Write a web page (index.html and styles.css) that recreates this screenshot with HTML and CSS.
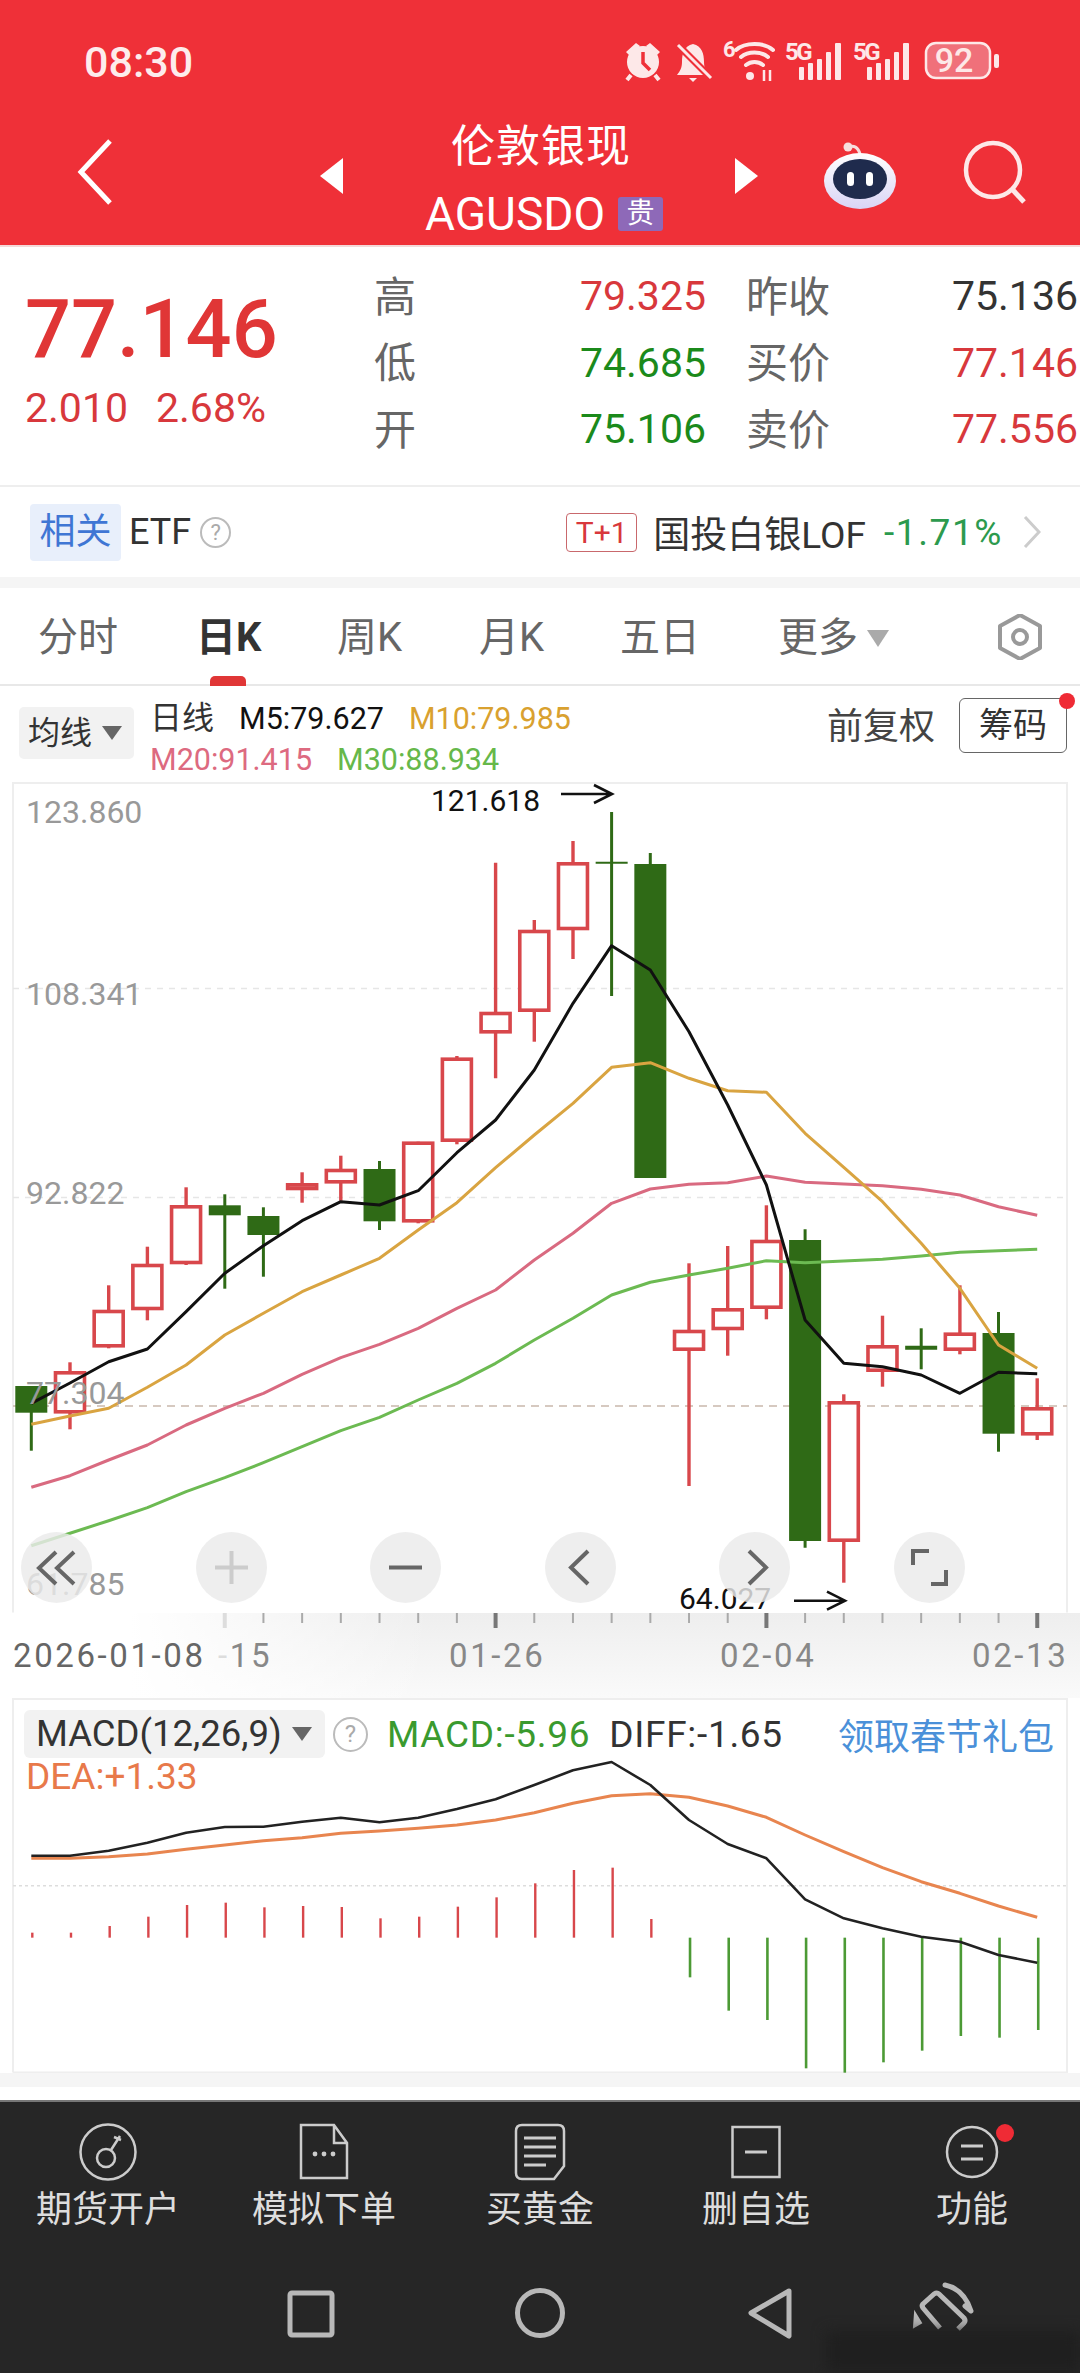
FILE: index.html
```html
<!DOCTYPE html>
<html lang="zh-CN">
<head>
<meta charset="UTF-8">
<title>伦敦银现</title>
<link rel="stylesheet" href="styles.css">
</head>
<body>
<div class="phone">

    <header class="top">
        <div class="status">
            <span class="clock">08:30</span>
            <svg class="status-icons" viewBox="625 30 374 52" width="374" height="52">
                <g fill="#fde8e8" stroke="none">
                    <circle cx="643" cy="62" r="16"/>
                    <path d="M626 52 L636 43 L640 46 L630 56 Z M660 52 L650 43 L646 46 L656 56 Z"/>
                    <path d="M631 75 L627 80 M655 75 L659 80" stroke="#fde8e8" stroke-width="4"/>
                    <path d="M643 52 V63 L650 70" fill="none" stroke="#ef3038" stroke-width="3.5"/>
                    <path d="M693 44 C684 46 682 54 682 62 C682 68 680 71 677 75 H709 C706 71 704 68 704 62 C704 54 702 46 693 44 Z"/>
                    <path d="M689 78 H697 L693 82 Z"/>
                    <path d="M678 45 L711 78" stroke="#ef3038" stroke-width="7"/>
                    <path d="M678 45 L711 78" stroke="#fde8e8" stroke-width="3"/>
                </g>
                <text x="723" y="57" class="st-small">6</text>
                <g fill="none" stroke="#fde8e8" stroke-width="4" stroke-linecap="round">
                    <path d="M736 50 C745 42 764 42 773 50"/>
                    <path d="M741 57 C748 51 761 51 768 57"/>
                    <path d="M746 65 C751 61 758 61 763 65"/>
                </g>
                <circle cx="750" cy="76" r="4" fill="#fde8e8"/>
                <path d="M764 70 V81 M770 70 V81" stroke="#fde8e8" stroke-width="2.5"/>
                <text x="785" y="60" class="st-small st-5g">5G</text>
                <g fill="#fde8e8">
                    <rect x="799" y="67" width="5" height="13" rx="1"/><rect x="808" y="63" width="5" height="17" rx="1"/>
                    <rect x="817" y="59" width="5" height="21" rx="1"/><rect x="826" y="52" width="5" height="28" rx="1"/><rect x="835" y="43" width="6" height="37" rx="1"/>
                </g>
                <text x="853" y="60" class="st-small st-5g">5G</text>
                <g fill="#fde8e8">
                    <rect x="867" y="67" width="5" height="13" rx="1"/><rect x="876" y="63" width="5" height="17" rx="1"/>
                    <rect x="885" y="59" width="5" height="21" rx="1"/><rect x="894" y="52" width="5" height="28" rx="1"/><rect x="903" y="43" width="6" height="37" rx="1"/>
                </g>
                <rect x="926" y="43" width="64" height="35" rx="10" fill="#f0707a" stroke="#fde8e8" stroke-width="2.5"/>
                <text x="954" y="72" class="st-batt" text-anchor="middle">92</text>
                <rect x="994" y="54" width="5" height="14" rx="2" fill="#fde8e8"/>
            </svg>
        </div>
        <div class="nav">
            <svg class="nav-back" width="36" height="66" viewBox="0 0 36 66">
                <path d="M33 2 L4 33 L33 64" fill="none" stroke="#fff" stroke-width="5"/>
            </svg>
            <span class="tri-left"></span>
            <div class="nav-title">
                <div class="nav-name">伦敦银现</div>
                <div class="nav-code">AGUSDO<span class="badge-gui">贵</span></div>
            </div>
            <span class="tri-right"></span>
            <svg class="nav-robot" width="76" height="72" viewBox="0 0 76 72">
                <defs>
                    <linearGradient id="robotHead" x1="0" y1="0" x2="0" y2="1">
                        <stop offset="0" stop-color="#ffffff"/><stop offset="1" stop-color="#d9d4f5"/>
                    </linearGradient>
                </defs>
                <path d="M26 8 C32 6 36 8 38 15" fill="none" stroke="#f7dede" stroke-width="3"/>
                <circle cx="26" cy="8" r="4.5" fill="#f7dede"/>
                <ellipse cx="38" cy="42" rx="36" ry="28" fill="url(#robotHead)"/>
                <ellipse cx="38" cy="40" rx="27" ry="20" fill="#1f2b4d"/>
                <rect x="25" y="33" width="7" height="14" rx="3.5" fill="#fff"/>
                <rect x="44" y="33" width="7" height="14" rx="3.5" fill="#fff"/>
            </svg>
            <svg class="nav-search" width="68" height="68" viewBox="0 0 68 68">
                <circle cx="31" cy="31" r="27" fill="none" stroke="#fde8e8" stroke-width="4.5"/>
                <path d="M50 50 L62 63" stroke="#fde8e8" stroke-width="5"/>
            </svg>
        </div>
    </header>

    <section class="quote">
        <div class="last">
            <div class="last-price">77.146</div>
            <div class="last-change"><span>2.010</span><span>2.68%</span></div>
        </div>
        <div class="quote-grid">
            <span class="q-label">高</span><span class="q-val up">79.325</span>
            <span class="q-label second">昨收</span><span class="q-val flat">75.136</span>
            <span class="q-label">低</span><span class="q-val down">74.685</span>
            <span class="q-label second">买价</span><span class="q-val up">77.146</span>
            <span class="q-label">开</span><span class="q-val down">75.106</span>
            <span class="q-label second">卖价</span><span class="q-val up">77.556</span>
        </div>
    </section>

    <section class="etf">
        <span class="etf-tag">相关</span>
        <span class="etf-name">ETF</span>
        <span class="help">?</span>
        <span class="etf-right">
            <span class="t1">T+1</span>
            <span class="etf-fund">国投白银LOF</span>
            <span class="etf-pct">-1.71%</span>
            <svg width="18" height="32" viewBox="0 0 18 32"><path d="M2 1 L16 16 L2 31" fill="none" stroke="#ccc" stroke-width="3"/></svg>
        </span>
    </section>

    <div class="gap"></div>

    <nav class="tabs">
        <span class="tab">分时</span>
        <span class="tab active">日K</span>
        <span class="tab">周K</span>
        <span class="tab">月K</span>
        <span class="tab">五日</span>
        <span class="tab">更多<i class="caret"></i></span>
        <svg class="hex" width="50" height="46" viewBox="0 0 50 46">
            <path d="M14 3 H36 L47 23 L36 43 H14 L3 23 Z" fill="none" stroke="#999" stroke-width="4" stroke-linejoin="round" transform="rotate(90 25 23)"/>
            <circle cx="25" cy="23" r="7" fill="none" stroke="#999" stroke-width="4"/>
        </svg>
    </nav>

    <div class="ma-row">
        <div class="ma-pill">均线<i class="caret small"></i></div>
        <div class="ma-values">
            <div class="ma-line"><span class="ma-kind">日线</span><span class="ma5">M5:79.627</span><span class="ma10">M10:79.985</span></div>
            <div class="ma-line"><span class="ma20">M20:91.415</span><span class="ma30">M30:88.934</span></div>
        </div>
        <span class="ma-adjust">前复权</span>
        <span class="ma-chip">筹码</span>
    </div>

    <div class="kline">
        <svg id="klineSvg" class="kline-svg" width="1080" height="831" viewBox="0 782 1080 831"></svg>
        <div class="zoom-bar">
            <span class="zoom-btn"><svg width="71" height="71" viewBox="0 0 71 71"><path d="M35 20 L18 36 L35 52 M53 20 L36 36 L53 52" fill="none" stroke="#666" stroke-width="4"/></svg></span>
            <span class="zoom-btn"><svg width="71" height="71" viewBox="0 0 71 71"><path d="M19 35.5 H52 M35.5 19 V52" fill="none" stroke="#ccc" stroke-width="4"/></svg></span>
            <span class="zoom-btn"><svg width="71" height="71" viewBox="0 0 71 71"><path d="M19 35.5 H52" fill="none" stroke="#666" stroke-width="4"/></svg></span>
            <span class="zoom-btn"><svg width="71" height="71" viewBox="0 0 71 71"><path d="M43 19 L26 35.5 L43 52" fill="none" stroke="#666" stroke-width="4"/></svg></span>
            <span class="zoom-btn"><svg width="71" height="71" viewBox="0 0 71 71"><path d="M30 19 L47 35.5 L30 52" fill="none" stroke="#666" stroke-width="4"/></svg></span>
            <span class="zoom-btn"><svg width="71" height="71" viewBox="0 0 71 71"><path d="M19 33 V19 H35 M52 38 V52 H37" fill="none" stroke="#666" stroke-width="4"/></svg></span>
        </div>
    </div>

    <div class="axis">
        <svg id="axisSvg" width="1080" height="85" viewBox="0 1613 1080 85"></svg>
    </div>

    <div class="macd">
        <div class="macd-head">
            <span class="macd-pill">MACD(12,26,9)<i class="caret small"></i></span>
            <span class="help macd-help">?</span>
            <span class="macd-val">MACD:-5.96</span>
            <span class="diff-val">DIFF:-1.65</span>
            <span class="macd-link">领取春节礼包</span>
        </div>
        <div class="dea-val">DEA:+1.33</div>
        <svg id="macdSvg" class="macd-svg" width="1080" height="375" viewBox="0 1698 1080 375"></svg>
    </div>

    <div class="gap gap-low"></div>
    <div class="white-strip"></div>

    <footer class="dock">
        <div class="dock-row">
            <div class="dock-item">
                <svg width="60" height="60" viewBox="0 0 60 60" fill="none" stroke="#ccc" stroke-width="2.5">
                    <circle cx="30" cy="30" r="27.5"/>
                    <circle cx="28" cy="36" r="9"/>
                    <path d="M33 28 L42 14 M36 15 L43 18"/>
                </svg>
                <span>期货开户</span>
            </div>
            <div class="dock-item">
                <svg width="60" height="60" viewBox="0 0 60 60" fill="none" stroke="#ccc" stroke-width="2.5">
                    <path d="M7 3 H40 L53 21 V56 H7 Z M40 3 V21 H53"/>
                    <circle cx="21" cy="32" r="2.4" fill="#ccc" stroke="none"/><circle cx="30" cy="32" r="2.4" fill="#ccc" stroke="none"/><circle cx="39" cy="32" r="2.4" fill="#ccc" stroke="none"/>
                </svg>
                <span>模拟下单</span>
            </div>
            <div class="dock-item">
                <svg width="60" height="60" viewBox="0 0 60 60" fill="none" stroke="#ccc" stroke-width="2.5">
                    <path d="M12 3 H48 Q54 3 54 9 V44 L44 57 H12 Q6 57 6 51 V9 Q6 3 12 3 Z"/>
                    <path d="M14 16 H46 M14 25 H46 M14 34 H46 M14 43 H36" stroke-width="3"/>
                </svg>
                <span>买黄金</span>
            </div>
            <div class="dock-item">
                <svg width="60" height="60" viewBox="0 0 60 60" fill="none" stroke="#ccc" stroke-width="2.5">
                    <rect x="6.5" y="5" width="47" height="50"/>
                    <path d="M19 30 H41" stroke-width="3"/>
                </svg>
                <span>删自选</span>
            </div>
            <div class="dock-item">
                <svg width="60" height="60" viewBox="0 0 60 60" fill="none" stroke="#ccc" stroke-width="2.5">
                    <circle cx="30" cy="30" r="25"/>
                    <path d="M19 24 H41 M19 37 H41" stroke-width="3"/>
                </svg>
                <span>功能</span>
                <i class="dock-dot"></i>
            </div>
        </div>
        <svg class="sys-nav" width="1080" height="60" viewBox="0 2282 1080 60" fill="none" stroke="#b8b8b8" stroke-width="5">
            <rect x="290" y="2293" width="42" height="42" rx="2"/>
            <circle cx="540" cy="2313" r="22.5"/>
            <path d="M789 2291 L751 2313 L789 2336 Z" stroke-linejoin="round"/>
            <path d="M940 2328 L923 2308 Q921 2305 924 2303 L934 2294 Q937 2292 939 2294 L964 2318 Q966 2321 964 2323 L958 2329" stroke-linejoin="round"/>
            <path d="M945 2285 Q964 2289 971 2311 L965 2306" stroke-linejoin="round" stroke-linecap="round"/>
            <path d="M915 2313 L914 2327 L921 2323 Z" fill="#b8b8b8" stroke-width="2"/>
        </svg>
        <div class="smudge"></div>
    </footer>
</div>
<script src="script.js"></script>
</body>
</html>
```

FILE: styles.css
```css
* {
    box-sizing: border-box;
}
html, body {
    margin: 0;
    padding: 0;
    background: #fff;
}
body {
    font-family: Roboto, "Noto Sans CJK SC", sans-serif;
    color: #333;
}
i {
    font-style: normal;
}
.phone {
    width: 1080px;
    height: 2373px;
    display: flex;
    flex-direction: column;
    overflow: hidden;
}

/* header */
.top {
    height: 247px;
    background: #ef3038;
    border-bottom: 2px solid #f3d9d9;
    color: #fff;
    flex: none;
}
.status {
    height: 106px;
    display: flex;
    align-items: flex-start;
    justify-content: space-between;
    padding: 30px 81px 0 84px;
}
.clock {
    font-size: 43px;
    font-weight: 500;
    line-height: 44px;
    margin-top: 10px;
    color: #fdecec;
}
.st-small {
    font: 700 22px Roboto, sans-serif;
    fill: #fde8e8;
}
.st-5g {
    font-size: 24px;
    letter-spacing: -2.5px;
}
.st-batt {
    font: 500 34px Roboto, sans-serif;
    fill: #fde8e8;
}
.nav {
    position: relative;
    height: 139px;
    display: flex;
    align-items: center;
}
.nav-back {
    margin-left: 77px;
    margin-top: -8px;
}
.tri-left, .tri-right {
    width: 0;
    height: 0;
    border-top: 18px solid transparent;
    border-bottom: 18px solid transparent;
}
.tri-left {
    border-right: 23px solid #fff;
    margin-left: 207px;
}
.tri-right {
    border-left: 23px solid #fff;
}
.nav-title {
    width: 392px;
    text-align: center;
    margin-top: 9px;
}
.nav-name {
    font-size: 44px;
    line-height: 60px;
    letter-spacing: 1px;
    padding-left: 4px;
}
.nav-code {
    font-size: 46px;
    line-height: 60px;
    padding-left: 10px;
    margin-top: 7px;
    display: flex;
    align-items: center;
    justify-content: center;
    gap: 13px;
}
.badge-gui {
    width: 45px;
    height: 34px;
    background: #8e69b8;
    font-size: 28px;
    line-height: 34px;
    border-radius: 3px;
    text-align: center;
}
.nav-robot {
    margin-left: 64px;
    margin-top: -2px;
}
.nav-search {
    margin-left: 64px;
    margin-top: -6px;
}

/* quote block */
.quote {
    height: 240px;
    flex: none;
    display: flex;
    padding-top: 13px;
    border-bottom: 2px solid #eee;
}
.last {
    width: 374px;
    padding-left: 25px;
}
.last-price {
    font-size: 81px;
    font-weight: 500;
    line-height: 98px;
    margin-top: 21px;
    color: #e03636;
}
.last-change {
    display: flex;
    gap: 28px;
    font-size: 41px;
    line-height: 46px;
    margin-top: 6px;
    color: #d8383c;
}
.quote-grid {
    display: grid;
    grid-template-columns: 44px 288px 127px 245px;
    grid-auto-rows: 66.5px;
    align-items: center;
}
.q-label {
    font-size: 42px;
    color: #666;
    white-space: nowrap;
}
.q-label.second {
    margin-left: 40px;
}
.q-val {
    font-size: 41px;
    text-align: right;
    padding-top: 6px;
}
.up {
    color: #d8383c;
}
.down {
    color: #1b8a1b;
}
.flat {
    color: #333;
}

/* etf row */
.etf {
    height: 90px;
    flex: none;
    display: flex;
    align-items: center;
    padding: 0 39px 0 30px;
}
.etf-tag {
    width: 91px;
    height: 57px;
    background: #e8effb;
    color: #3f76d4;
    font-size: 36px;
    line-height: 57px;
    text-align: center;
    border-radius: 4px;
}
.etf-name {
    font-size: 36px;
    margin-left: 8px;
}
.help {
    width: 31px;
    height: 31px;
    border: 2px solid #bbb;
    border-radius: 50%;
    color: #aaa;
    font-size: 22px;
    line-height: 27px;
    text-align: center;
    margin-left: 9px;
}
.etf-right {
    margin-left: auto;
    display: flex;
    align-items: center;
}
.t1 {
    width: 71px;
    height: 39px;
    border: 1px solid #c9686c;
    border-radius: 4px;
    color: #d8383c;
    font-size: 30px;
    line-height: 37px;
    text-align: center;
}
.etf-fund {
    font-size: 37px;
    margin-left: 16px;
}
.etf-pct {
    font-size: 37px;
    letter-spacing: 1.6px;
    color: #2c9a4e;
    margin-left: 18px;
    margin-right: 20px;
}
.gap {
    height: 11px;
    flex: none;
    background: #f5f5f5;
}

/* tabs */
.tabs {
    position: relative;
    height: 98px;
    flex: none;
    border-bottom: 2px solid #e8e8e8;
    display: grid;
    grid-template-columns: 158px 141px 142px 141px 158px 217px 50px;
    padding-left: 38px;
    padding-top: 21px;
}
.tab {
    font-size: 40px;
    line-height: 58px;
    color: #666;
    display: flex;
    align-items: flex-start;
}
.tab.active {
    color: #333;
    font-weight: 700;
    position: relative;
}
.tab.active::after {
    content: "";
    position: absolute;
    left: 14px;
    top: 67px;
    width: 36px;
    height: 10px;
    background: #e03636;
    border-radius: 5px 5px 0 0;
}
.caret {
    display: inline-block;
    width: 0;
    height: 0;
    border-left: 11px solid transparent;
    border-right: 11px solid transparent;
    border-top: 17px solid #aaa;
    margin: 21px 0 0 9px;
}
.caret.small {
    border-left-width: 10px;
    border-right-width: 10px;
    border-top-width: 14px;
    border-top-color: #666;
}
.hex {
    margin-top: 5px;
}

/* MA legend */
.ma-row {
    height: 96px;
    flex: none;
    display: flex;
    align-items: flex-start;
    padding: 12px 13px 0 19px;
}
.ma-pill {
    width: 115px;
    height: 52px;
    margin-top: 9px;
    background: #f2f2f2;
    border-radius: 5px;
    font-size: 32px;
    line-height: 52px;
    padding-left: 9px;
    display: flex;
}
.ma-pill .caret {
    margin: 19px 0 0 10px;
}
.ma-values {
    margin-left: 16px;
    font-size: 30.5px;
    line-height: 41px;
}
.ma-line {
    display: flex;
    gap: 25px;
}
.ma-kind {
    font-size: 32px;
    color: #333;
}
.ma5 { color: #111; }
.ma10 { color: #d9a12f; }
.ma20 { color: #dd6a80; }
.ma30 { color: #66b84a; }
.ma-adjust {
    margin-left: auto;
    font-size: 36px;
    line-height: 50px;
    margin-top: 4px;
    color: #444;
}
.ma-chip {
    position: relative;
    width: 108px;
    height: 55px;
    margin-left: 24px;
    border: 1px solid #666;
    border-radius: 6px;
    font-size: 34px;
    line-height: 53px;
    text-align: center;
}
.ma-chip::after {
    content: "";
    position: absolute;
    right: -9px;
    top: -6px;
    width: 16px;
    height: 16px;
    border-radius: 50%;
    background: #ef2b35;
}

/* kline */
.kline {
    position: relative;
    height: 831px;
    flex: none;
}
.kline-svg {
    display: block;
}
.price-label {
    font: 32px Roboto, sans-serif;
    fill: #999;
}
.note-label {
    font: 30px Roboto, sans-serif;
    fill: #111;
}
.zoom-bar {
    position: absolute;
    left: 21px;
    top: 750px;
    display: flex;
    gap: 103.6px;
}
.zoom-btn {
    width: 71px;
    height: 71px;
    border-radius: 50%;
    background: rgba(234, 234, 234, .82);
    display: block;
}
.zoom-btn svg {
    display: block;
}
.axis {
    height: 85px;
    flex: none;
    background:
        linear-gradient(90deg, #fff 0, #fff 12%, rgba(255, 255, 255, 0) 40%),
        linear-gradient(180deg, #eee 0, #fafafa 100%);
}
.axis svg {
    display: block;
}
.date-label {
    font: 33px Roboto, sans-serif;
    letter-spacing: 2.6px;
    fill: #888;
}
.date-label.first {
    fill: #666;
}

/* macd */
.macd {
    position: relative;
    height: 375px;
    flex: none;
}
.macd-svg {
    position: absolute;
    left: 0;
    top: 0;
}
.macd-head {
    position: relative;
    z-index: 1;
    display: flex;
    align-items: center;
    height: 48px;
    margin-top: 12px;
    padding-left: 24px;
    font-size: 37px;
}
.macd-pill {
    width: 301px;
    height: 48px;
    background: #f2f2f2;
    border-radius: 6px;
    padding-left: 12px;
    font-size: 36.5px;
    line-height: 48px;
    color: #333;
    display: flex;
    white-space: nowrap;
}
.macd-pill .caret {
    margin: 17px 0 0 10px;
}
.macd-help {
    width: 35px;
    height: 35px;
    font-size: 24px;
    line-height: 31px;
    margin-left: 8px;
}
.macd-val {
    color: #3a9a2e;
    letter-spacing: .7px;
    margin-left: 19px;
}
.diff-val {
    color: #333;
    letter-spacing: .7px;
    margin-left: 19px;
}
.macd-link {
    color: #4a90d9;
    font-size: 36px;
    margin-left: auto;
    margin-right: 26px;
}
.dea-val {
    position: relative;
    z-index: 1;
    font-size: 37px;
    line-height: 40px;
    padding-left: 26px;
    margin-top: -1px;
    color: #e8794a;
}
.gap-low {
    height: 14px;
}
.white-strip {
    height: 13px;
    flex: none;
}

/* bottom */
.dock {
    position: relative;
    flex: 1;
    background: #262626;
    border-top: 2px solid #777;
    color: #ddd;
}
.dock-row {
    display: grid;
    grid-template-columns: repeat(5, 216px);
    padding-top: 20px;
}
.dock-item {
    position: relative;
    display: flex;
    flex-direction: column;
    align-items: center;
    font-size: 36px;
    line-height: 50px;
}
.dock-item span {
    margin-top: 3px;
}
.dock-dot {
    position: absolute;
    left: 132px;
    top: 2px;
    width: 18px;
    height: 18px;
    border-radius: 50%;
    background: #ef2b35;
}
.sys-nav {
    display: block;
    position: absolute;
    left: 0;
    top: 180px;
}
.smudge {
    position: absolute;
    right: 0;
    bottom: 0;
    width: 254px;
    height: 42px;
    background: #1f1f1f;
    filter: blur(7px);
}
```

FILE: script.js
```js
// candle x = 31.3 + step * index, all y values are page pixels
const step = 38.69;
const xAt = i => 31.3 + step * i;

const RED = "#d8474b";
const GREEN = "#2f6a16";

// [color, bodyTop, bodyBottom, wickTop, wickBottom]
const candles = [
    ["g", 1386, 1412.7, 1386, 1450.7],
    ["r", 1371.3, 1413.3, 1362.3, 1429.3],
    ["r", 1310, 1347.3, 1285.3, 1348.3],
    ["r", 1264, 1310, 1246.7, 1320.3],
    ["r", 1205.3, 1264, 1187.3, 1265],
    ["g", 1205.3, 1215.3, 1194.3, 1288.7],
    ["g", 1216, 1235, 1207.3, 1276.7],
    ["r", 1183.3, 1190, 1172.3, 1202.7],
    ["r", 1169, 1183.3, 1155.7, 1200.7],
    ["g", 1169, 1221.3, 1161, 1230],
    ["r", 1141.7, 1222.3, 1141.7, 1223.3],
    ["r", 1057.7, 1141.7, 1056, 1144.3],
    ["r", 1012, 1033.3, 862.7, 1078.3],
    ["r", 930, 1011.7, 920, 1041.7],
    ["r", 862.3, 930, 841, 959],
    ["c", 862.7, 862.7, 812, 996],
    ["g", 864, 1178, 853, 1178],
    ["r", 1330, 1350.7, 1263.3, 1486],
    ["r", 1308.3, 1330, 1246, 1355.7],
    ["r", 1240, 1308.7, 1205.3, 1319.3],
    ["g", 1240, 1541, 1229.3, 1547.7],
    ["r", 1401.3, 1541.7, 1394.3, 1582.7],
    ["r", 1345.3, 1371.7, 1315.7, 1386.7],
    ["c", 1347.7, 1347.7, 1328.3, 1369.3],
    ["r", 1332.7, 1350.7, 1285.3, 1354.3],
    ["g", 1333, 1433.7, 1312, 1451.7],
    ["r", 1407.3, 1435.3, 1378.3, 1440]
];

const ma5 = [1403.3, 1383, 1361.7, 1349, 1311.7, 1273.3, 1245.7, 1220.7, 1201.7, 1205, 1190.7, 1152.7, 1120, 1070, 1003.3, 945.7, 970, 1031.7, 1105, 1185, 1320, 1363.3, 1366.7, 1375, 1393.3, 1372.3, 1373.7];
const ma10 = [1424.3, 1416, 1408.3, 1387.3, 1365, 1335, 1313.3, 1291.7, 1275, 1258.3, 1230, 1202.7, 1167.7, 1135, 1103.3, 1067.3, 1062.7, 1078.3, 1090.7, 1092.3, 1133.3, 1167.3, 1201.7, 1243.3, 1288.3, 1345, 1368.3];
const ma20 = [1487.3, 1475.7, 1460, 1445, 1425, 1408.3, 1393.3, 1374.3, 1357.7, 1344.3, 1328.3, 1308.3, 1290, 1260, 1233.3, 1203.3, 1189, 1184.3, 1182.7, 1176, 1182.3, 1184, 1185.7, 1189.3, 1195, 1206.7, 1215.3];
const ma30 = [1545.7, 1533.3, 1520.7, 1507.7, 1491.7, 1477.7, 1462.7, 1446.7, 1430.7, 1417.3, 1400, 1383.3, 1363.3, 1340, 1318.3, 1295, 1282.3, 1275, 1268.3, 1260.7, 1262.7, 1261, 1259.3, 1256, 1252.3, 1250.7, 1249.3];

function polyline(ys, color, width, toY) {
    const pts = ys.map((y, i) => xAt(i).toFixed(1) + "," + (toY ? toY(y) : y).toFixed(1)).join(" ");
    return `<polyline points="${pts}" fill="none" stroke="${color}" stroke-width="${width}" stroke-linejoin="round"/>`;
}

function drawCandle(c, i) {
    const x = xAt(i).toFixed(1);
    const [kind, top, bottom, wickTop, wickBottom] = c;
    const color = kind === "r" ? RED : GREEN;
    let out = `<line x1="${x}" x2="${x}" y1="${wickTop}" y2="${wickBottom}" stroke="${color}" stroke-width="${kind === "r" ? 3.4 : 3}"/>`;
    if (kind === "c") {
        return out + `<line x1="${xAt(i) - 16}" x2="${xAt(i) + 16}" y1="${top}" y2="${top}" stroke="${color}" stroke-width="${i === 23 ? 4 : 2}"/>`;
    }
    if (kind === "g") {
        return out + `<rect x="${xAt(i) - 16}" y="${top}" width="32" height="${bottom - top}" fill="${color}"/>`;
    }
    return out + `<rect x="${xAt(i) - 14.5}" y="${top + 1.5}" width="29" height="${bottom - top - 3}" fill="#fff" stroke="${color}" stroke-width="3.6"/>`;
}

function arrow(x1, x2, y) {
    return `<path d="M${x1} ${y} H${x2} M${x2 - 18} ${y - 9} L${x2} ${y} L${x2 - 18} ${y + 9}" fill="none" stroke="#111" stroke-width="2.6"/>`;
}

let k = `<path d="M13 1612.5 V783 H1067 V1612.5" fill="none" stroke="#eee" stroke-width="2"/>`;
k += `<path d="M13 988.5 H1067 M13 1197.5 H1067" stroke="#e6e6e6" stroke-width="1.4" stroke-dasharray="6 6"/>`;
k += `<path d="M13 1406 H1067" stroke="#c9b8ac" stroke-width="1.6" stroke-dasharray="8 6"/>`;
k += candles.map(drawCandle).join("");
k += polyline(ma30, "#6cba52", 3);
k += polyline(ma20, "#d96a80", 3);
k += polyline(ma10, "#d9a441", 3);
k += polyline(ma5, "#111", 3);
[["123.860", 822.5], ["108.341", 1005], ["92.822", 1204], ["77.304", 1404], ["61.785", 1595]].forEach(l => {
    k += `<text x="26" y="${l[1]}" class="price-label">${l[0]}</text>`;
});
k += `<text x="431" y="811" class="note-label">121.618</text>` + arrow(561, 612, 794);
k += `<text x="679" y="1608.5" class="note-label">64.027</text>` + arrow(794, 845, 1600.7);
document.getElementById("klineSvg").innerHTML = k;

// axis ticks and dates
let a = "";
for (let i = 5; i < 27; i++) {
    const big = i === 12 || i === 19 || i === 26;
    const color = i === 5 ? "#ddd" : big ? "#777" : "#aaa";
    a += `<line x1="${xAt(i)}" x2="${xAt(i)}" y1="1613" y2="${big || i === 5 ? 1628 : 1623}" stroke="${color}" stroke-width="${big || i === 5 ? 4 : 2}"/>`;
}
a += `<text x="13" y="1667" class="date-label first">2026-01-08</text>`;
a += `<text x="218" y="1667" class="date-label"><tspan fill="#ddd">-</tspan>15</text>`;
a += `<text x="449" y="1667" class="date-label">01-26</text>`;
a += `<text x="720" y="1667" class="date-label">02-04</text>`;
a += `<text x="972" y="1667" class="date-label">02-13</text>`;
document.getElementById("axisSvg").innerHTML = a;

// macd, y read off as offset from 1680 times three
const fromZ = z => 1680 + z / 3;
const diff = [527, 527, 512, 488, 458, 441, 440, 425, 413, 427, 413, 387, 358, 315, 271, 246, 315, 420, 492, 535, 658, 715, 745, 770, 785, 825, 848];
const dea = [535, 535, 530, 522, 508, 495, 482, 473, 460, 453, 445, 435, 420, 398, 370, 347, 341, 352, 378, 412, 465, 515, 563, 605, 640, 678, 712];
const hist = [758, 758, 738, 710, 675, 668, 682, 678, 681, 715, 710, 680, 652, 610, 570, 563, 717, 892, 992, 1020, 1165, 1178, 1147, 1112, 1068, 1073, 1050];

let m = `<path d="M13 2072.5 V1699 H1067 V2072.5 H13" fill="none" stroke="#eee" stroke-width="2"/>`;
m += `<path d="M13 1885.7 H1067" stroke="#ddd" stroke-width="1.4" stroke-dasharray="3 3"/>`;
hist.forEach((z, i) => {
    const x = xAt(i) + 1;
    m += `<line x1="${x}" x2="${x}" y1="${fromZ(773)}" y2="${fromZ(z)}" stroke="${i < 17 ? "#d8474b" : "#4c9a35"}" stroke-width="${i < 17 ? 2.4 : 2.6}"/>`;
});
m += polyline(dea, "#e8854f", 3, fromZ);
m += polyline(diff, "#222", 2.6, fromZ);
document.getElementById("macdSvg").innerHTML = m;
```
